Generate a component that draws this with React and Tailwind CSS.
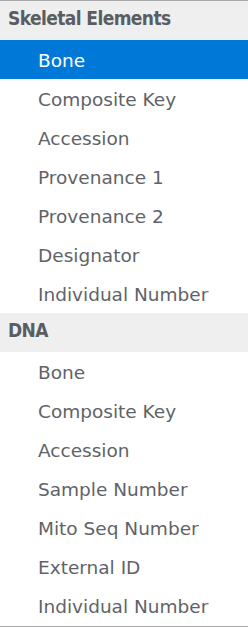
import React from 'react';

const groups = [
  {
    title: 'Skeletal Elements',
    items: ['Bone', 'Composite Key', 'Accession', 'Provenance 1', 'Provenance 2', 'Designator', 'Individual Number'],
  },
  {
    title: 'DNA',
    items: ['Bone', 'Composite Key', 'Accession', 'Sample Number', 'Mito Seq Number', 'External ID', 'Individual Number'],
  },
];

const App = () => {
  const selected = '0-0';

  return (
    <div
      className="w-[248px] h-[627px] bg-white border-y border-[#a8a8a8] overflow-hidden"
      style={{ fontFamily: '"DejaVu Sans", sans-serif' }}
    >
      {groups.map((group, gi) => (
        <div key={group.title}>
          {/* Cabeçalho do grupo */}
          <div className="h-[39px] flex items-center pl-[8px] pb-[5px] bg-[#efefef] text-[#5a5e62] font-bold text-[19px] tracking-[-0.6px] font-['DejaVu_Sans_Condensed','DejaVu_Sans',sans-serif]">
            {group.title}
          </div>
          {group.items.map((item, ii) => {
            const isSel = `${gi}-${ii}` === selected;
            return (
              <div
                key={item + ii}
                className={
                  isSel
                    ? 'h-[39px] flex items-center pl-[38px] pt-[3px] bg-[#0078d7] text-white text-[18.5px]'
                    : 'h-[39px] flex items-center pl-[38px] pt-[3px] text-[#5f6368] text-[18.5px]'
                }
              >
                {item}
              </div>
            );
          })}
        </div>
      ))}
    </div>
  );
};

export default App;
